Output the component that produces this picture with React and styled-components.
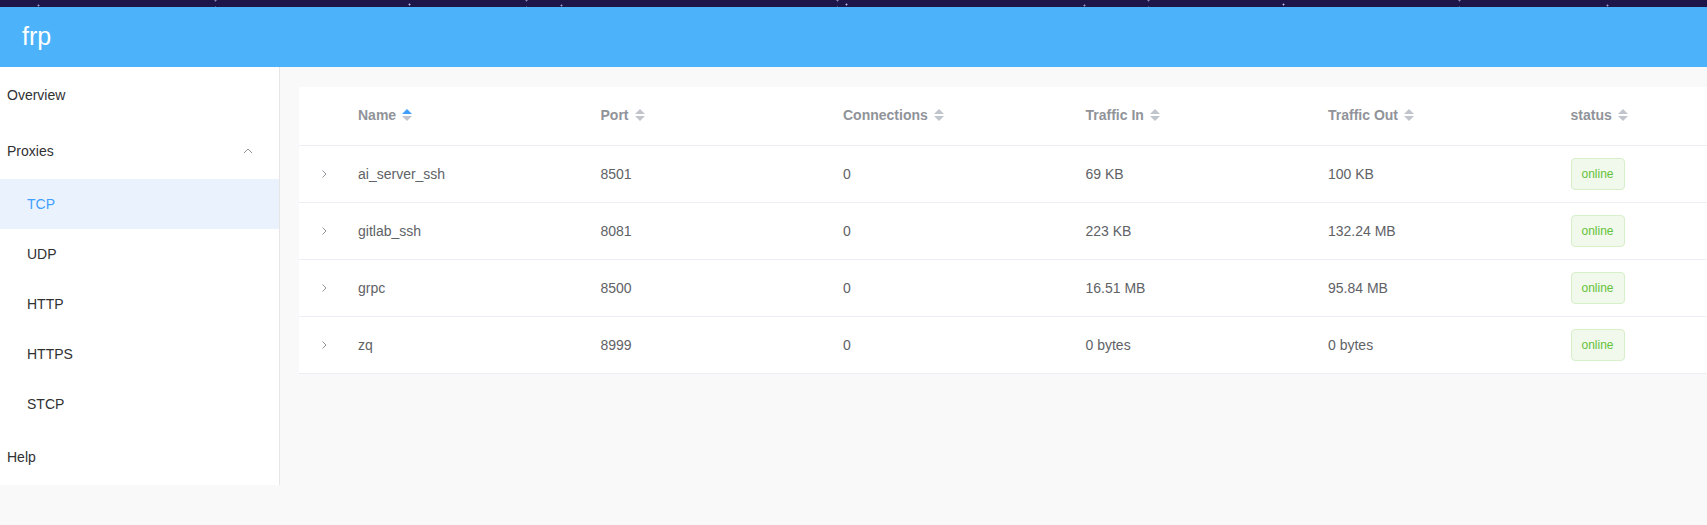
import styled, { createGlobalStyle } from "styled-components";

const GlobalStyle = createGlobalStyle`
  html, body {
    margin: 0;
    padding: 0;
    background: #f9f9f9;
    font-family: "Liberation Sans", Arial, sans-serif;
    overflow: hidden;
  }
`;

const Page = styled.div`
  width: 1707px;
  height: 525px;
  display: flex;
  flex-direction: column;
  background: #f9f9f9;
`;

// dark strip left over from the desktop behind the window
const TopStrip = styled.div`
  height: 7px;
  flex-shrink: 0;
  background-color: #1e1649;
  background-image:
    radial-gradient(circle, #b8b8e0 0.8px, transparent 1.2px),
    radial-gradient(circle, #8888b8 0.8px, transparent 1.2px),
    radial-gradient(circle, #9c9cd0 0.8px, transparent 1.2px);
  background-size: 437px 7px, 311px 7px, 523px 7px;
  background-position: 191px 1px, 60px 4px, 300px 2px;
`;

const Header = styled.header`
  height: 60px;
  flex-shrink: 0;
  background: #4cb3fb;
  display: flex;
  align-items: center;
  padding-left: 22px;
`;

const Brand = styled.span`
  color: #fff;
  font-size: 25px;
  line-height: 1;
  margin-top: -2px;
`;

const Body = styled.div`
  display: flex;
  flex: 1;
  align-items: flex-start;
  min-height: 0;
`;

const Sidebar = styled.nav`
  width: 279px;
  flex-shrink: 0;
  background: #fff;
  border-right: 1px solid #e6e6e6;
`;

const MenuItem = styled.div`
  height: ${(p) => (p.$sub ? 50 : 56)}px;
  display: flex;
  align-items: center;
  justify-content: space-between;
  padding-left: ${(p) => (p.$sub ? 27 : 7)}px;
  padding-right: 26px;
  font-size: 14px;
  color: ${(p) => (p.$active ? "#409eff" : "#303133")};
  background: ${(p) => (p.$active ? "#eaf3fd" : "transparent")};
`;

const Main = styled.main`
  flex: 1;
  padding: 20px 0 0 19px;
  overflow: hidden;
  align-self: stretch;
  background: #f9f9f9;
`;

const Table = styled.div`
  width: 1510px;
  background: #fff;
  font-size: 14px;
`;

const Row = styled.div`
  display: grid;
  grid-template-columns: 48px repeat(6, 242.5px);
  height: ${(p) => (p.$head ? 58 : 56)}px;
  border-bottom: 1px solid #ebeef5;
  align-items: center;
`;

const HeadCell = styled.div`
  padding-left: 11px;
  color: #909399;
  font-weight: bold;
  display: flex;
  align-items: center;
  padding-bottom: 2px;
`;

const Cell = styled.div`
  padding-left: 11px;
  color: #606266;
  display: flex;
  align-items: center;
`;

const ExpandCell = styled.div`
  display: flex;
  justify-content: center;
  padding-left: 2px;
  color: #909399;
`;

const Carets = styled.span`
  display: inline-flex;
  flex-direction: column;
  margin-left: 6px;
  gap: 2px;
`;

const Caret = styled.span`
  width: 0;
  height: 0;
  border-left: 5px solid transparent;
  border-right: 5px solid transparent;
  ${(p) =>
    p.$up
      ? `border-bottom: 5px solid ${p.$on ? "#409eff" : "#c0c4cc"};`
      : `border-top: 5px solid #c0c4cc;`}
`;

const Tag = styled.span`
  display: inline-flex;
  align-items: center;
  height: 32px;
  padding: 0 10px;
  font-size: 12px;
  color: #67c23a;
  background: #f0f9eb;
  border: 1px solid #d7f0c9;
  border-radius: 4px;
  box-sizing: border-box;
`;

const Chevron = ({ dir }) => (
  <svg width="10" height="10" viewBox="0 0 10 10" fill="none" stroke="currentColor" strokeWidth="1">
    {dir === "up" ? <path d="M1 7 L5 3 L9 7" /> : <path d="M3.5 1.5 L7 5 L3.5 8.5" />}
  </svg>
);

const SortHead = ({ label, active }) => (
  <HeadCell>
    {label}
    <Carets>
      <Caret $up $on={active} />
      <Caret />
    </Carets>
  </HeadCell>
);

const proxies = [
  { name: "ai_server_ssh", port: 8501, conns: 0, in: "69 KB", out: "100 KB" },
  { name: "gitlab_ssh", port: 8081, conns: 0, in: "223 KB", out: "132.24 MB" },
  { name: "grpc", port: 8500, conns: 0, in: "16.51 MB", out: "95.84 MB" },
  { name: "zq", port: 8999, conns: 0, in: "0 bytes", out: "0 bytes" },
];

export default function App() {
  return (
    <Page>
      <GlobalStyle />
      <TopStrip />
      <Header>
        <Brand>frp</Brand>
      </Header>
      <Body>
        <Sidebar>
          <MenuItem>Overview</MenuItem>
          <MenuItem>
            Proxies
            <span style={{ color: "#909399", display: "flex" }}>
              <Chevron dir="up" />
            </span>
          </MenuItem>
          <MenuItem $sub $active>TCP</MenuItem>
          <MenuItem $sub>UDP</MenuItem>
          <MenuItem $sub>HTTP</MenuItem>
          <MenuItem $sub>HTTPS</MenuItem>
          <MenuItem $sub>STCP</MenuItem>
          <MenuItem>Help</MenuItem>
        </Sidebar>
        <Main>
          <Table>
            <Row $head>
              <div />
              <SortHead label="Name" active />
              <SortHead label="Port" />
              <SortHead label="Connections" />
              <SortHead label="Traffic In" />
              <SortHead label="Traffic Out" />
              <SortHead label="status" />
            </Row>
            {proxies.map((p) => (
              <Row key={p.name}>
                <ExpandCell>
                  <Chevron dir="right" />
                </ExpandCell>
                <Cell>{p.name}</Cell>
                <Cell>{p.port}</Cell>
                <Cell>{p.conns}</Cell>
                <Cell>{p.in}</Cell>
                <Cell>{p.out}</Cell>
                <Cell>
                  <Tag>online</Tag>
                </Cell>
              </Row>
            ))}
          </Table>
        </Main>
      </Body>
    </Page>
  );
}
